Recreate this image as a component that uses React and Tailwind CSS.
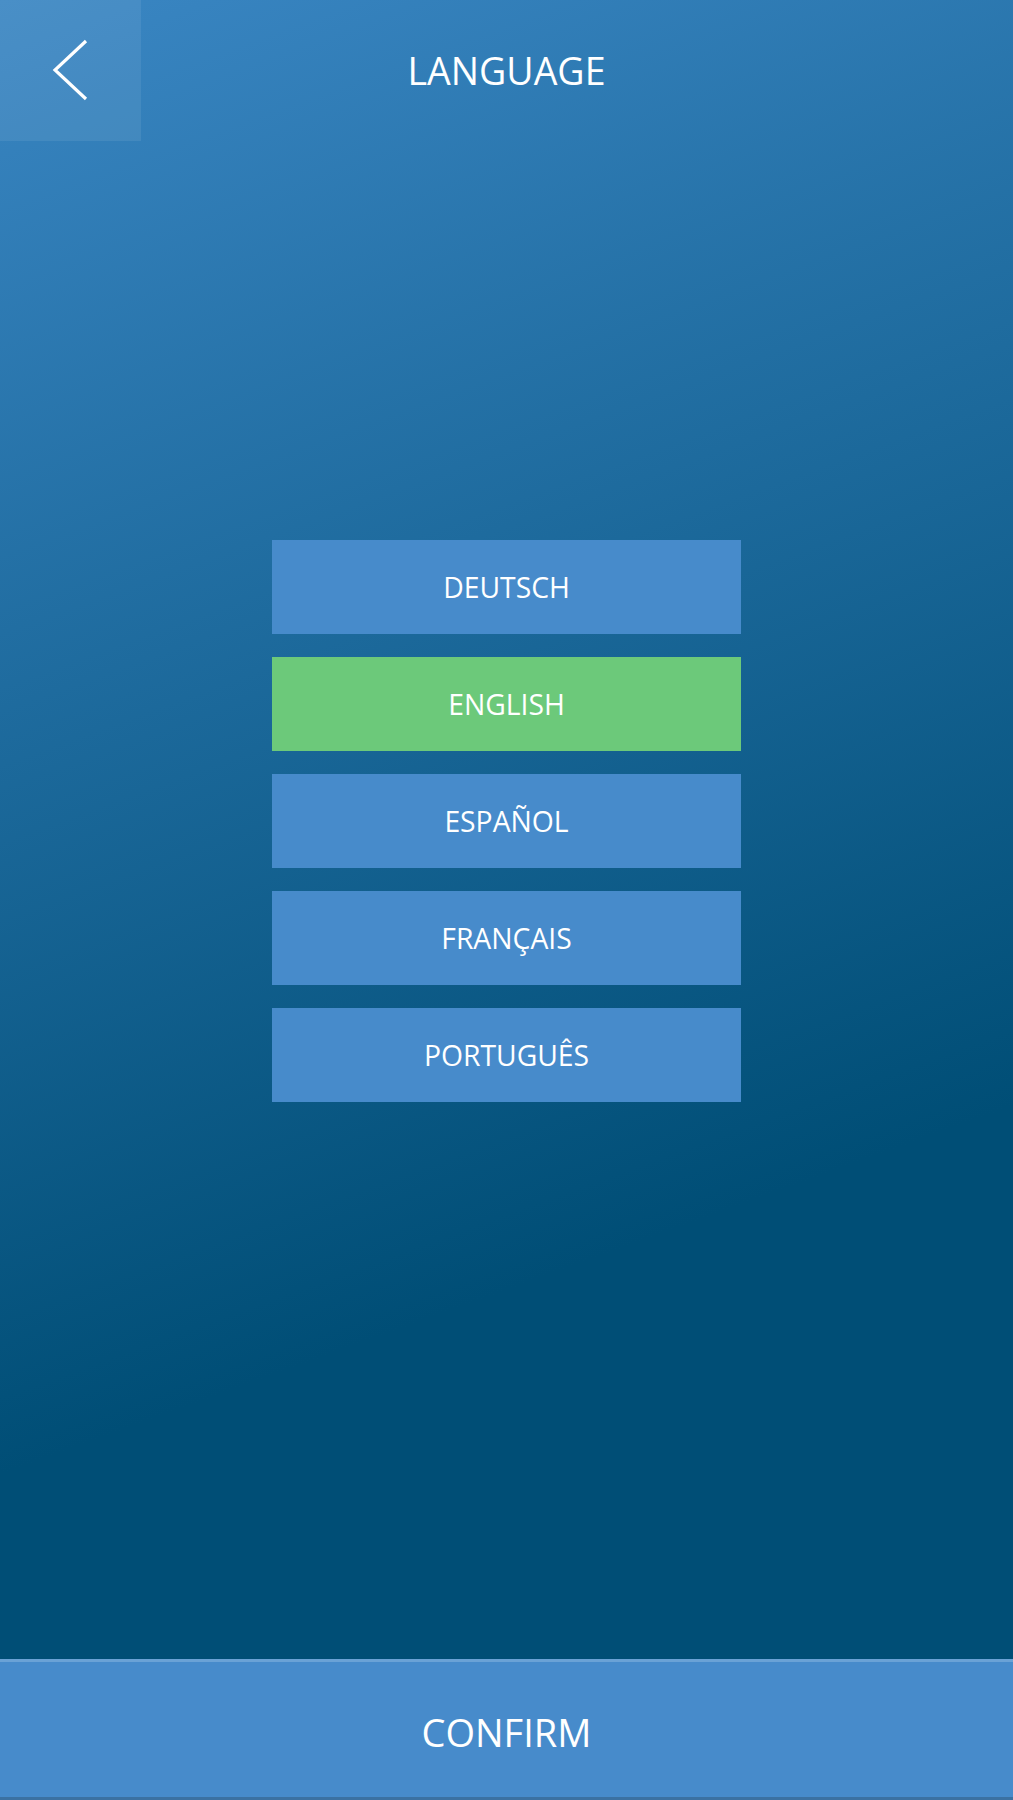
import React, { useState } from 'react';

const LANGUAGES = ['DEUTSCH', 'ENGLISH', 'ESPAÑOL', 'FRANÇAIS', 'PORTUGUÊS'];

export default function App() {
  const [selected, setSelected] = useState('ENGLISH');

  return (
    <div
      className="flex min-h-[1800px] w-full flex-col bg-[linear-gradient(160deg,#3a86c3_0%,#004e76_68%,#004e76_100%)] text-white"
      style={{ fontFamily: '"Open Sans", "Liberation Sans", sans-serif' }}
    >
      <header className="relative flex h-[141px] items-center justify-center">
        <button className="absolute left-0 top-0 flex h-[141px] w-[141px] items-center justify-center bg-white/[0.08]">
          <svg width="141" height="141" viewBox="0 0 141 141" fill="none">
            <polyline points="86,41 55,70 86,99" stroke="white" strokeWidth="3.2" strokeLinecap="butt" strokeLinejoin="miter" />
          </svg>
        </button>
        <h1 className="text-[37.5px] font-normal leading-none">LANGUAGE</h1>
      </header>

      <main className="flex flex-1 flex-col items-center gap-[23px] pt-[399px]">
        {LANGUAGES.map((lang) => (
          <button
            key={lang}
            onClick={() => setSelected(lang)}
            className={`flex h-[94px] w-[469px] items-center justify-center text-[28.3px] font-normal leading-none ${selected === lang ? 'bg-[#6cc97a]' : 'bg-[#478bcb]'}`}
          >
            {lang}
          </button>
        ))}
      </main>

      <button className="flex h-[141px] w-full items-center justify-center border-t-[3px] border-b-[3px] border-t-[#6aa2d6] border-b-[#3b71a2] bg-[#478bcb] pt-[4px] text-[38px] font-normal leading-none">
        CONFIRM
      </button>
    </div>
  );
}
